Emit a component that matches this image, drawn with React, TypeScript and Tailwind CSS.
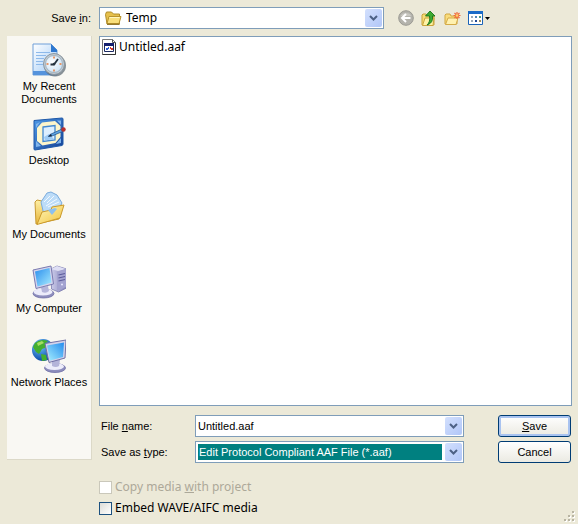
import { useState } from "react";
import type { ReactNode } from "react";

/* ── PLACES BAR ICONS ── */

function RecentIcon() {
  return (
    <svg viewBox="0 0 34 34" className="size-[34px]" aria-hidden="true">
      <defs>
        <linearGradient id="recentPage" x1="0" y1="0" x2="1" y2="1">
          <stop offset="0" stopColor="#ffffff" />
          <stop offset="1" stopColor="#9cc8f6" />
        </linearGradient>
        <radialGradient id="recentFace" cx="0.4" cy="0.4" r="0.6">
          <stop offset="0" stopColor="#ffffff" />
          <stop offset="1" stopColor="#cfe4f5" />
        </radialGradient>
      </defs>
      <path d="M1 1h18l6 6v25H1z" fill="url(#recentPage)" stroke="#6f9fd8" />
      <path d="M19 1l6 6v2h-6z" fill="#2f78cf" />
      <path d="M4 9.500h14M4 12.500h10M4 15.500h8M4 18.500h7M4 21.500h7" stroke="#8db9ea" />
      <path d="M1 28h14l6 4H1z" fill="#5593dc" />
      <circle cx="23" cy="22.500" r="11" fill="#59656f" opacity="0.7" />
      <circle cx="22" cy="21" r="10.500" fill="#c3ccd3" stroke="#8a969f" />
      <circle cx="22" cy="21" r="8.500" fill="url(#recentFace)" stroke="#8ea3b3" strokeWidth="0.7" />
      <path d="M22 13.500v2M22 26.500v2M14.500 21h2M27.500 21h2" stroke="#e87b3a" strokeWidth="1.500" />
      <path d="M26 16l-4 5.500h-3.500" fill="none" stroke="#26333f" strokeWidth="1.800" />
      <circle cx="22" cy="21" r="1.300" fill="#26333f" />
    </svg>
  );
}

function DesktopIcon() {
  return (
    <svg viewBox="0 0 34 34" className="size-[34px]" aria-hidden="true">
      <defs>
        <linearGradient id="deskBlue" x1="0" y1="0" x2="1" y2="1">
          <stop offset="0" stopColor="#4f9be8" />
          <stop offset="1" stopColor="#123f94" />
        </linearGradient>
      </defs>
      <path d="M2 3.500L30 1q1 0 1 1v25q0 1-1 1.500L3 33q-1 0-1-1z" fill="url(#deskBlue)" stroke="#1f59a8" />
      <path d="M4 7l4-2-4 6zM25 3.500h4V8zM29 21v5l-5 1zM4 24l5 5-5 1z" fill="#7fb5ec" />
      <path d="M10 5.500l13-1.500 5.500 5v11l-5 6-13 2.500L5 24V11z" fill="#fdf6cb" />
      <path d="M11 10l12-1.500V23L11 24.500z" fill="#dcefff" stroke="#4389d0" strokeWidth="1.300" />
      <path d="M12 20l5-3 5 5-9 1.500z" fill="#9ccbf5" />
      <path d="M18 17.500L29 12.500l1.500 2L20 19l-3.500.500z" fill="#5ea5e4" stroke="#27588f" strokeWidth="0.800" />
      <path d="M16 19.500l3-2.500 1 2.300z" fill="#17273c" />
      <circle cx="31.500" cy="12.500" r="2.200" fill="#b8302c" />
    </svg>
  );
}

function DocumentsIcon() {
  return (
    <svg viewBox="0 0 34 34" className="size-[34px]" aria-hidden="true">
      <defs>
        <linearGradient id="docsBack" x1="0" y1="0" x2="0" y2="1">
          <stop offset="0" stopColor="#fff0a5" />
          <stop offset="1" stopColor="#e6b53a" />
        </linearGradient>
        <linearGradient id="docsFront" x1="0" y1="0" x2="1" y2="1">
          <stop offset="0" stopColor="#fff7bd" />
          <stop offset="1" stopColor="#f1c33c" />
        </linearGradient>
      </defs>
      <path d="M3 11l2-2 5 1 2 3 18 1-3 14-23 5z" fill="url(#docsBack)" stroke="#c89a32" />
      <path d="M9 11L15 2l4-1 6 3 5 8-6 10-12 2z" fill="#bcdcf8" stroke="#7aabdc" />
      <path d="M12 11l6-6M15 12l7-7M14 15l11-7M16 16l11-5" stroke="#ffffff" strokeWidth="0.800" />
      <path d="M5 33.500L10 21l9-2 1-3 12-2-4 13z" fill="url(#docsFront)" stroke="#cb9a2b" />
      <path d="M16 19l7-2 2 1-5 6z" fill="#8cc0ef" />
    </svg>
  );
}

function ComputerIcon() {
  return (
    <svg viewBox="0 0 34 34" className="size-[34px]" aria-hidden="true">
      <defs>
        <linearGradient id="pcScreen" x1="0" y1="0" x2="1" y2="1">
          <stop offset="0" stopColor="#2a8eed" />
          <stop offset="1" stopColor="#a8ecff" />
        </linearGradient>
        <linearGradient id="pcTower" x1="0" y1="0" x2="1" y2="0">
          <stop offset="0" stopColor="#cdcdeb" />
          <stop offset="1" stopColor="#8181b5" />
        </linearGradient>
      </defs>
      <path d="M19 4l6-3 9.500 3v19l-8 4-7-3z" fill="url(#pcTower)" stroke="#7a7aae" strokeWidth="0.800" />
      <path d="M19 4l6-3 9 3-8 2z" fill="#dfdff4" />
      <path d="M25 7v19l9-4V4z" fill="#a3a3d0" />
      <path d="M26.500 10l6.500-1.500M26.500 13l6.500-1.500M26.500 16l6.500-1.500" stroke="#5c5c9a" strokeWidth="1.200" />
      <circle cx="30" cy="19.500" r="1" fill="#e8e8ff" />
      <ellipse cx="11.500" cy="28.500" rx="10.500" ry="4.500" fill="#8e8ebd" stroke="#6e6ea6" strokeWidth="0.800" />
      <ellipse cx="11" cy="27" rx="9.500" ry="3.500" fill="#ececfa" />
      <path d="M9 22l7-1 1 5q-3 3-7 1z" fill="#b5b5da" />
      <path d="M1 5L19 1l2.500 18L4 23.500z" fill="#d4d4ec" stroke="#7b7bb0" />
      <path d="M3 6.500l14.500-3.500 2 14.500L5.500 21.500z" fill="url(#pcScreen)" />
    </svg>
  );
}

function NetworkIcon() {
  return (
    <svg viewBox="0 0 34 34" className="size-[34px]" aria-hidden="true">
      <defs>
        <radialGradient id="netGlobe" cx="0.350" cy="0.300" r="0.700">
          <stop offset="0" stopColor="#73c9ff" />
          <stop offset="1" stopColor="#0949a8" />
        </radialGradient>
        <linearGradient id="netScreen" x1="0" y1="1" x2="1" y2="0">
          <stop offset="0" stopColor="#a6efff" />
          <stop offset="1" stopColor="#238bee" />
        </linearGradient>
      </defs>
      <circle cx="11" cy="11" r="11" fill="url(#netGlobe)" />
      <path d="M3 4q6-5 13-2l-3 3 2 3-5 2-3 5-3-2-3-5zM9 15l5 1 1 5-5 1z" fill="#45af2f" />
      <path d="M5 4l5-2 2 2-6 3z" fill="#a5de62" />
      <ellipse cx="23" cy="29" rx="10.500" ry="4.500" fill="#8e8ebd" stroke="#6e6ea6" strokeWidth="0.800" />
      <ellipse cx="22.500" cy="27.500" rx="9.500" ry="3.500" fill="#ededfa" />
      <path d="M20 21h8l-1 6q-3 2-7 0z" fill="#b4b4d9" />
      <path d="M13 4.500L34 1l-1 18-16 4.500z" fill="#d2d2ea" stroke="#7272a6" />
      <path d="M15 6.500L32 3.500l-1 14.500L18 21.500z" fill="url(#netScreen)" />
    </svg>
  );
}

/* ── SMALL ICONS ── */

function FolderIcon() {
  return (
    <svg viewBox="0 0 17 14" className="h-[14px] w-[17px]" aria-hidden="true">
      <path d="M.5 3.500l1-2.500h5l2 2h6v10H2z" fill="#e6c04c" stroke="#b08c2a" />
      <path d="M2 12.500L4 5.500h12L14 12.500z" fill="#f9df7c" stroke="#b8932c" />
      <path d="M4.500 6.500h10" stroke="#fff6c0" />
      <path d="M2 13.300h12.500" stroke="#84661a" />
    </svg>
  );
}

function FileIcon() {
  return (
    <svg viewBox="0 0 14 16" className="h-4 w-[14px]" aria-hidden="true">
      <path d="M.5.5h10l3 3v12H.5z" fill="#ffffff" stroke="#777777" />
      <path d="M10.500.5v3h3" fill="none" stroke="#555555" />
      <path d="M13.500 4v11.500H.5" fill="none" stroke="#333333" />
      <path d="M2.500 4.500h9v8h-9z" fill="#ffffff" stroke="#1c2a63" />
      <path d="M2 4h10v3H2z" fill="#14206f" />
      <path d="M4 9h2v2H4z" fill="#2b5bd3" />
      <path d="M6 8h1v2H6z" fill="#2b5bd3" />
      <path d="M8 8h1v2H8zM9 9h2v2H9z" fill="#d33c2b" />
    </svg>
  );
}

function BackIcon() {
  return (
    <svg viewBox="0 0 16 16" className="size-4" aria-hidden="true">
      <circle cx="8" cy="8" r="7.300" fill="#b4b3ac" stroke="#9b9a93" />
      <path d="M2.500 6a6 5 0 0 1 11 0z" fill="#c9c8c2" />
      <path d="M12.500 8H4.500M8 4L4 8l4 4" fill="none" stroke="#ffffff" strokeWidth="2" />
    </svg>
  );
}

function UpIcon() {
  return (
    <svg viewBox="0 0 16 17" className="h-[17px] w-4" aria-hidden="true">
      <path d="M1 5l1-1h3l1 1h7v10H1z" fill="#f7dc75" stroke="#c9a23a" />
      <path d="M1.500 15.500L4 8h9l-1 7.500z" fill="#fff2a4" stroke="#caa43c" />
      <path d="M6 15q3.500-3 2.500-9H4.500L9 1l5 5h-2.500q1 7-5.500 9z" fill="#3dab32" stroke="#1b731b" strokeWidth="0.900" />
    </svg>
  );
}

function NewFolderIcon() {
  return (
    <svg viewBox="0 0 17 15" className="h-[15px] w-[17px]" aria-hidden="true">
      <path d="M1 4l1-1h4l1 2h6v8H1z" fill="#f8dc7c" stroke="#d1a743" />
      <path d="M1.500 13.500L4 7h10l-2 6.500z" fill="#fff1b0" stroke="#d4ab47" />
      <path d="M13 1v7M9.500 4.500h7M10.500 2l5 5M15.500 2l-5 5" stroke="#f0693a" strokeWidth="1.200" />
      <circle cx="13" cy="4.500" r="1.300" fill="#ffd26a" />
    </svg>
  );
}

function ViewsIcon() {
  return (
    <svg viewBox="0 0 22 15" className="h-[15px] w-[22px]" aria-hidden="true">
      <path d="M.5.5h14v13H.5z" fill="#ffffff" stroke="#1a63b8" />
      <path d="M0 0h15v3H0z" fill="#1a6bc8" />
      <path d="M3 5h2v2H3zM3 9h2v2H3z" fill="#9aaab8" />
      <path d="M7 5h2v2H7z" fill="#4f86bd" />
      <path d="M11 5h2v2h-2z" fill="#4f9a78" />
      <path d="M7 9h2v2H7z" fill="#234a94" />
      <path d="M11 9h2v2h-2z" fill="#9c8b58" />
      <path d="M17 6h5l-2.500 3z" fill="#000000" />
    </svg>
  );
}

function DropArrow() {
  return (
    <svg viewBox="0 0 9 6" className="h-[6px] w-[9px]" aria-hidden="true">
      <path d="M1 1l3.500 3.500L8 1" fill="none" stroke="#4d6185" strokeWidth="2" />
    </svg>
  );
}

const ARROW_BOX =
  "pointer-events-none flex w-[17px] shrink-0 items-center justify-center rounded-xs bg-linear-to-br from-[#d3e0fd] to-[#b1c6f8]";
const FIELD = "flex h-[22px] min-w-0 border border-[#7f9db9] bg-white p-px";
const BUTTON =
  "h-[22px] rounded-[3px] border border-[#003c74] bg-linear-to-b from-white to-[#ebeae2] leading-[18px]";

const PLACES: { label: string; icon: ReactNode }[] = [
  { label: "My Recent Documents", icon: <RecentIcon /> },
  { label: "Desktop", icon: <DesktopIcon /> },
  { label: "My Documents", icon: <DocumentsIcon /> },
  { label: "My Computer", icon: <ComputerIcon /> },
  { label: "Network Places", icon: <NetworkIcon /> },
];

const TOOLS = [
  { label: "Back", icon: <BackIcon />, disabled: true },
  { label: "Up One Level", icon: <UpIcon />, disabled: false },
  { label: "Create New Folder", icon: <NewFolderIcon />, disabled: false },
  { label: "View Menu", icon: <ViewsIcon />, disabled: false },
];

export default function App() {
  const [fileName, setFileName] = useState("Untitled.aaf");
  const [embed, setEmbed] = useState(false);

  return (
    <form
      onSubmit={(e) => e.preventDefault()}
      className="relative flex min-h-screen flex-col bg-[#ece9d8] pr-[6px] pl-[7px] font-['Liberation_Sans',sans-serif] text-[11px] text-black"
    >
      {/* ── Look-in row ── */}
      <div className="flex items-center pt-[7px]">
        <label htmlFor="folder" className="w-[92px] shrink-0 pr-2 text-right">
          Save <u>i</u>n:
        </label>
        <div className={`${FIELD} flex-1 items-stretch`}>
          <span className="flex items-center pl-1">
            <FolderIcon />
          </span>
          <select id="folder" className="min-w-0 flex-1 appearance-none bg-transparent px-1 font-['Noto_Sans',sans-serif] text-xs outline-none">
            <option>Temp</option>
          </select>
          <span className={ARROW_BOX}>
            <DropArrow />
          </span>
        </div>
        <div className="flex w-[188px] shrink-0 items-center gap-[7px] pl-[14px]">
          {TOOLS.map((t) => (
            <button key={t.label} type="button" aria-label={t.label} disabled={t.disabled}>
              {t.icon}
            </button>
          ))}
        </div>
      </div>

      <div className="flex flex-1 gap-[7px] pt-[7px]">
        {/* ── Places bar ── */}
        <nav className="mb-16 w-[85px] shrink-0 border-r border-b border-[#dcd9c8] bg-[#f9f8f3]">
          {PLACES.map((p) => (
            <button key={p.label} type="button" className="flex h-[74px] w-full flex-col items-center gap-[3px] pt-[7px] leading-[13px]">
              {p.icon}
              <span>{p.label}</span>
            </button>
          ))}
        </nav>

        <div className="flex min-w-0 flex-1 flex-col">
          {/* ── File list ── */}
          <ul className="flex-1 border border-[#7f9db9] bg-white p-[2px] font-['Noto_Sans',sans-serif] text-xs">
            <li className="flex items-center gap-[3px]">
              <FileIcon />
              Untitled.aaf
            </li>
          </ul>

          {/* ── Name and type fields ── */}
          <div className="flex items-center pt-[9px]">
            <label htmlFor="name" className="w-24 shrink-0 pl-[2px]">
              File <u>n</u>ame:
            </label>
            <div className={`${FIELD} flex-1`}>
              <input
                id="name"
                value={fileName}
                onChange={(e) => setFileName(e.target.value)}
                className="min-w-0 flex-1 px-px outline-none"
              />
              <span className={ARROW_BOX}>
                <DropArrow />
              </span>
            </div>
            <button type="submit" className={`${BUTTON} mr-px ml-[34px] w-[73px] inset-ring-2 inset-ring-[#a9c3f0]`}>
              <u>S</u>ave
            </button>
          </div>
          <div className="flex items-center pt-1">
            <label htmlFor="type" className="w-24 shrink-0 pl-[2px]">
              Save as <u>t</u>ype:
            </label>
            <div className={`${FIELD} flex-1`}>
              <select id="type" className="m-px mr-[3px] min-w-0 flex-1 appearance-none bg-[#008080] px-px text-white outline-none">
                <option>Edit Protocol Compliant AAF File (*.aaf)</option>
              </select>
              <span className={ARROW_BOX}>
                <DropArrow />
              </span>
            </div>
            <button type="button" className={`${BUTTON} mr-px ml-[34px] w-[73px]`}>
              Cancel
            </button>
          </div>

          {/* ── Options ── */}
          <div className="flex flex-col gap-[5px] pt-4 pb-2 font-['Noto_Sans',sans-serif] text-xs leading-4">
            <label className="flex items-center gap-[3px] text-[#aca899]">
              <input type="checkbox" disabled className="size-[13px] appearance-none border border-[#cac8bb] bg-white" />
              <span>
                Copy media <u>w</u>ith project
              </span>
            </label>
            <label className="flex items-center gap-[3px]">
              <input
                type="checkbox"
                checked={embed}
                onChange={(e) => setEmbed(e.target.checked)}
                className="size-[13px] appearance-none border border-[#1c5180] bg-linear-to-br from-[#dcdcd7] to-white checked:bg-[#21a121]"
              />
              Embed WAVE/AIFC media
            </label>
          </div>
        </div>
      </div>

      {/* resize grip */}
      <svg viewBox="0 0 12 12" className="absolute right-[2px] bottom-px size-3" aria-hidden="true">
        <path d="M9 1h2v2H9zM5 5h2v2H5zM9 5h2v2H9zM1 9h2v2H1zM5 9h2v2H5zM9 9h2v2H9z" fill="#ffffff" />
        <path d="M8 0h2v2H8zM4 4h2v2H4zM8 4h2v2H8zM0 8h2v2H0zM4 8h2v2H4zM8 8h2v2H8z" fill="#b8b4a2" />
      </svg>
    </form>
  );
}
